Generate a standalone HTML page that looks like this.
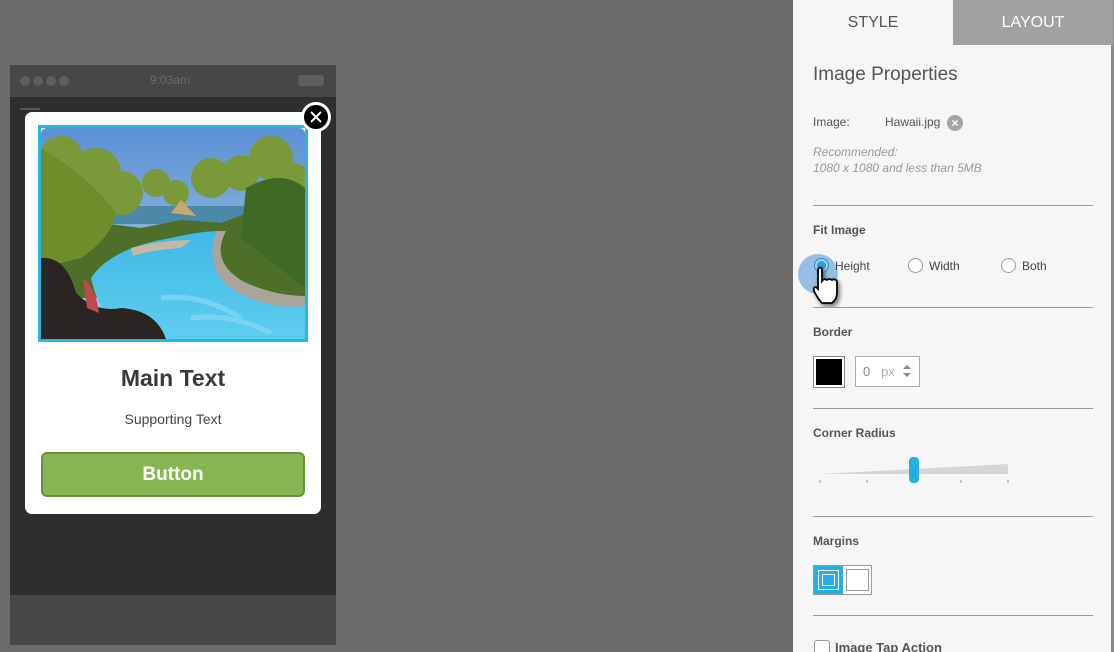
<!DOCTYPE html>
<html><head><style>
*{margin:0;padding:0;box-sizing:border-box}
html,body{width:1114px;height:652px;overflow:hidden}
body{background:#6b6b6b;position:relative;font-family:"Liberation Sans","DejaVu Sans",sans-serif}
.a{position:absolute}
.hr{position:absolute;left:813px;width:280px;height:1px;background:#9a9a9a}
.lbl{position:absolute;left:813px;font-size:12px;font-weight:bold;color:#555}
.radio{position:absolute;width:15px;height:15px;border:1px solid #999;border-radius:50%;background:#fff}
.rt{position:absolute;font-size:12px;color:#444}
</style></head><body>
<div class="a" style="left:10px;top:65px;width:326px;height:580px;background:#474747"></div>
<div class="a" style="left:10px;top:97px;width:326px;height:498px;background:#2e2e2e"></div>
<div class="a" style="left:20px;top:76px;width:10px;height:10px;border-radius:50%;background:#5e5e5e;box-shadow:13px 0 #5e5e5e,26px 0 #5e5e5e,39px 0 #5e5e5e"></div>
<div class="a" style="left:150px;top:73px;font-size:12px;color:#6a6a6a">9:03am</div>
<div class="a" style="left:298px;top:75px;width:26px;height:11px;border-radius:3px;background:#5e5e5e"></div>
<div class="a" style="left:20px;top:108px;width:20px;height:2px;background:#555"></div>
<div class="a" style="left:25px;top:112px;width:296px;height:402px;background:#fff;border-radius:7px"></div>
<div class="a" style="left:38px;top:125px;width:270px;height:217px;border:3px solid #29b5e4;background:#fff">
<svg width="264" height="211" style="display:block" viewBox="0 0 264 211">
<defs><linearGradient id="s" x1="0" y1="0" x2="0" y2="1"><stop offset="0" stop-color="#5a90d4"/><stop offset="1" stop-color="#b4cfe8"/></linearGradient>
<linearGradient id="p" x1="0" y1="0" x2="0" y2="1"><stop offset="0" stop-color="#3fb9e6"/><stop offset="1" stop-color="#5fcdef"/></linearGradient></defs>
<rect width="264" height="211" rx="6" fill="url(#s)"/>
<rect y="78" width="264" height="18" fill="#4a8aa8"/>
<g fill="#7a9a3a">
<circle cx="20" cy="30" r="22"/><circle cx="55" cy="45" r="25"/><circle cx="80" cy="65" r="22"/><circle cx="115" cy="55" r="14"/><circle cx="135" cy="65" r="13"/><circle cx="170" cy="50" r="20"/><circle cx="200" cy="45" r="18"/><circle cx="230" cy="30" r="22"/><circle cx="250" cy="60" r="25"/>
</g>
<path d="M0 60 Q30 70 60 95 L100 100 L140 92 L180 95 L220 80 L264 70 L264 170 L0 170Z" fill="#4d6f2a"/>
<path d="M0 20 L0 140 L40 130 Q70 110 75 85 Q50 50 0 20Z" fill="#6e8e2c"/>
<path d="M205 60 Q240 40 264 60 L264 160 L200 110Z" fill="#3f6a26"/>
<path d="M130 85 L140 72 L155 88Z" fill="#c8a86e"/>
<path d="M50 150 Q70 120 130 110 Q165 102 185 103 Q165 130 195 150 Q230 168 264 168 L264 211 L90 211 Q60 195 50 150Z" fill="url(#p)"/>
<path d="M185 103 Q168 135 205 155 Q235 168 264 168 L264 178 Q228 182 196 164 Q162 145 175 104Z" fill="#aaa598"/>
<path d="M90 120 Q120 112 150 112 L140 120 Q110 122 92 128Z" fill="#c2b8a4"/>
<path d="M0 130 Q25 128 35 165 Q55 185 80 180 Q115 182 125 211 L0 211Z" fill="#2a2522"/>
<path d="M42 150 Q55 160 58 185 L46 180Z" fill="#c04a4a"/>
<path d="M120 170 Q160 165 200 190 M150 190 Q190 185 230 205" stroke="#8fdcf5" stroke-width="5" fill="none" opacity=".6"/>
</svg></div>
<div class="a" style="left:301px;top:102px;width:30px;height:30px;border-radius:50%;background:#000;border:3px solid #fff"></div>
<svg class="a" style="left:308px;top:109px" width="16" height="16"><path d="M3 3L13 13M13 3L3 13" stroke="#fff" stroke-width="2"/></svg>
<div class="a" style="left:25px;top:365px;width:296px;text-align:center;font-size:23px;font-weight:bold;color:#3a3a3a">Main Text</div>
<div class="a" style="left:25px;top:411px;width:296px;text-align:center;font-size:14px;color:#444">Supporting Text</div>
<div class="a" style="left:41px;top:452px;width:264px;height:45px;background:#86b551;border:2px solid #66913a;border-radius:6px;text-align:center;line-height:41px;font-size:19px;font-weight:bold;color:#fff">Button</div>
<div class="a" style="left:793px;top:0;width:318px;height:652px;background:#f6f6f6"></div>
<div class="a" style="left:1111px;top:0;width:3px;height:652px;background:#8a8a8a"></div>
<div class="a" style="left:953px;top:0;width:160px;height:45px;background:#a1a1a1;color:#fff;font-size:16px;text-align:center;line-height:45px">LAYOUT</div>
<div class="a" style="left:793px;top:0;width:160px;height:45px;color:#555;font-size:16px;text-align:center;line-height:45px">STYLE</div>
<div class="a" style="left:813px;top:64px;font-size:19px;color:#555">Image Properties</div>
<div class="a" style="left:813px;top:115px;font-size:12px;color:#555">Image:</div>
<div class="a" style="left:885px;top:115px;font-size:12px;color:#555">Hawaii.jpg</div>
<div class="a" style="left:947px;top:115px;width:16px;height:16px;border-radius:50%;background:#a5a5a5;color:#fff;font-size:12px;font-weight:bold;text-align:center;line-height:16px">×</div>
<div class="a" style="left:813px;top:144px;font-size:12px;color:#999;font-style:italic;line-height:16px">Recommended:<br>1080 x 1080 and less than 5MB</div>
<div class="hr" style="top:205px"></div>
<div class="lbl" style="top:223px">Fit Image</div>
<div class="a" style="left:798px;top:254px;width:40px;height:40px;border-radius:50%;background:rgba(110,170,220,.7)"></div>
<div class="radio" style="left:814px;top:258px;border-color:#2a8fd0;background:#2a9ee0;box-shadow:inset 0 0 0 2px #9ed2f0"></div>
<div class="rt" style="left:835px;top:259px">Height</div>
<div class="radio" style="left:908px;top:258px"></div>
<div class="rt" style="left:929px;top:259px">Width</div>
<div class="radio" style="left:1001px;top:258px"></div>
<div class="rt" style="left:1022px;top:259px">Both</div>
<svg class="a" style="left:810px;top:265px" width="34" height="42" viewBox="0 0 34 42"><path d="M8 4 Q10 1 12 4 L12 16 Q14 13 17 15 Q19 13 22 15 Q24 13 27 16 L27 28 Q27 34 22 38 L12 38 Q8 34 4 26 Q3 22 6 22 L8 24Z" fill="#fff" stroke="#000" stroke-width="1.8" filter="drop-shadow(2px 3px 2px rgba(0,0,0,.5))"/></svg>
<div class="hr" style="top:307px"></div>
<div class="lbl" style="top:325px">Border</div>
<div class="a" style="left:813px;top:356px;width:32px;height:32px;border:1px solid #888;background:#fff;padding:2px"><div style="width:26px;height:26px;background:#000"></div></div>
<div class="a" style="left:855px;top:356px;width:65px;height:31px;border:1px solid #aaa;background:#fff;font-size:13px;line-height:30px;color:#aaa;padding-left:7px"><span style="color:#888">0</span>&nbsp;&nbsp; px</div>
<svg class="a" style="left:902px;top:364px" width="10" height="14"><path d="M1 5L5 1L9 5ZM1 9L5 13L9 9Z" fill="#888"/></svg>
<div class="hr" style="top:408px"></div>
<div class="lbl" style="top:426px">Corner Radius</div>
<svg class="a" style="left:815px;top:455px" width="200" height="35"><path d="M5 19L193 9L193 19Z" fill="#d6d6d6"/><g stroke="#999"><path d="M5 25v3M52 25v3M146 25v3M193 25v3"/></g><rect x="94" y="2" width="10" height="26" rx="4" fill="#22b0e6"/></svg>
<div class="hr" style="top:516px"></div>
<div class="lbl" style="top:534px">Margins</div>
<div class="a" style="left:813px;top:565px;width:59px;height:30px;border:1px solid #999;background:#fff"></div>
<div class="a" style="left:814px;top:566px;width:29px;height:28px;background:#22b0e6"><div style="margin:4px;width:21px;height:20px;border:1px solid #fff;padding:3px"><div style="width:13px;height:12px;border:1px solid #fff"></div></div></div>
<div class="a" style="left:846px;top:569px;width:23px;height:22px;border:1px solid #999"></div>
<div class="hr" style="top:615px"></div>
<div class="a" style="left:814px;top:640px;width:16px;height:16px;border:1px solid #999;border-radius:3px;background:#fff"></div>
<div class="lbl" style="left:835px;top:640px;font-size:13px">Image Tap Action</div>
</body></html>
